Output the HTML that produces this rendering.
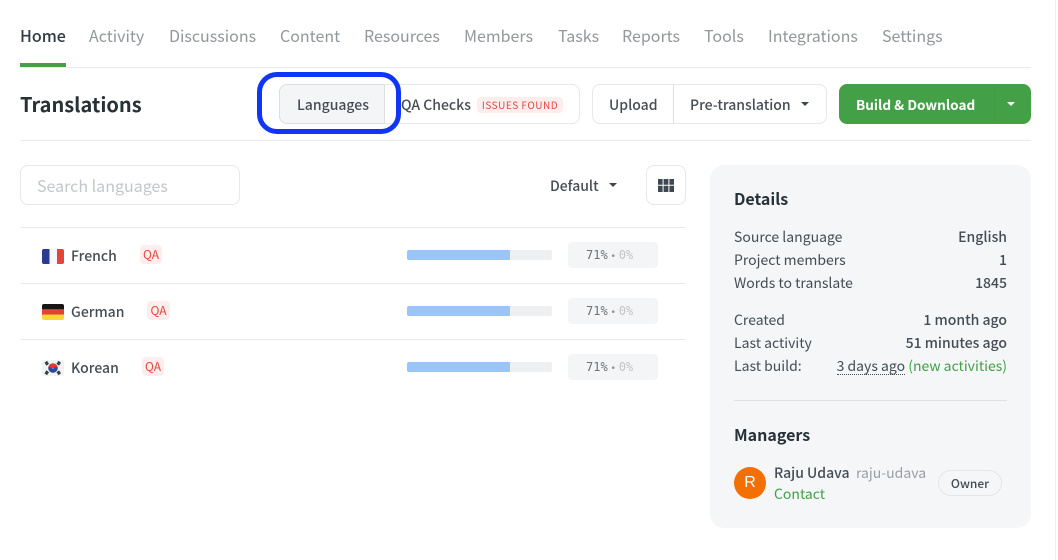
<!DOCTYPE html>
<html><head><meta charset="utf-8"><style>
html,body{margin:0;padding:0;background:#fff}
#p{position:relative;width:1058px;height:560px;overflow:hidden;background:#fff;font-family:"Noto Sans CJK JP","Liberation Sans",sans-serif;font-size:14px;color:#454c54}
#p div,#p span.t{position:absolute;box-sizing:border-box}
.t{white-space:nowrap;line-height:20px;height:20px}
.n{font-size:16px;color:#92979c;top:25px;line-height:20px}
.r{text-align:right;right:51px}
.b{font-weight:500}
.h{font-weight:700;color:#263238;font-size:16px}
.q{background:#fdeeed;color:#e5483f;font-size:12px;border-radius:4px;text-align:center;line-height:19px;height:19px}
.m{font-family:"DejaVu Sans Mono","Liberation Mono",monospace;font-size:12px;background:#f4f5f7;border-radius:4px;width:90px;height:26px;left:568px;line-height:26px;color:#6a7076;padding-left:18px;white-space:nowrap}
.m i{font-style:normal;color:#c2c5c9}
.m b{font-weight:400;color:#8d9297;display:inline-block;width:11px;text-align:center;font-size:9px}
.bar{left:407px;width:145px;height:10px;background:#eeeff1;border-radius:2px;overflow:hidden}
.bar div{left:0;top:0;height:10px;width:103px;background:#9ac5fb}
.l{left:20px;width:666px;height:1px;background:#e9eaec}
.c{width:0;height:0;border-left:4.5px solid transparent;border-right:4.5px solid transparent;border-top:4.5px solid #3f4750}
</style></head><body><div id="p">
<span class="t n b" style="left:20px;color:#2f3a42">Home</span>
<span class="t n" style="left:89px">Activity</span>
<span class="t n" style="left:169px">Discussions</span>
<span class="t n" style="left:280px">Content</span>
<span class="t n" style="left:364px">Resources</span>
<span class="t n" style="left:464px">Members</span>
<span class="t n" style="left:558px">Tasks</span>
<span class="t n" style="left:622px">Reports</span>
<span class="t n" style="left:704px">Tools</span>
<span class="t n" style="left:768px">Integrations</span>
<span class="t n" style="left:882px">Settings</span>
<div style="left:20px;top:67px;width:1011px;height:1px;background:#e9eaec"></div>
<div style="left:20px;top:63px;width:46px;height:4px;background:#43a047"></div>
<span class="t" style="left:20px;top:94px;font-size:20px;font-weight:700;color:#263238">Translations</span>
<div style="left:20px;top:140px;width:1011px;height:1px;background:#e9eaec"></div>
<div style="left:279px;top:84px;width:301px;height:40px;border:1px solid #e6e8ea;border-radius:8px"></div>
<div style="left:279px;top:84px;width:106px;height:40px;background:#f4f5f6;border:1px solid #dcdfe2;border-radius:8px 0 0 8px"></div>
<span class="t b" style="left:297px;top:95px">Languages</span>
<span class="t b" style="left:401px;top:95px">QA Checks</span>
<div class="t" style="left:477px;top:97px;width:86px;height:16px;line-height:16px;background:#fdeeed;color:#e5483f;font-size:10px;letter-spacing:.5px;border-radius:4px;text-align:center">ISSUES FOUND</div>
<div style="left:257px;top:72px;width:144px;height:62px;border:5px solid #0f35f5;border-radius:20px"></div>
<div style="left:592px;top:84px;width:235px;height:40px;border:1px solid #e6e8ea;border-radius:8px"></div>
<div style="left:673px;top:84px;width:1px;height:40px;background:#dcdfe2"></div>
<span class="t b" style="left:609px;top:95px">Upload</span>
<span class="t b" style="left:690px;top:95px">Pre-translation</span>
<div class="c" style="left:801px;top:102px"></div>
<div style="left:839px;top:84px;width:192px;height:40px;background:#43a047;border-radius:8px"></div>
<div style="left:994px;top:84px;width:1px;height:40px;background:rgba(0,0,0,.02)"></div>
<span class="t" style="left:856px;top:94px;font-size:13.6px;font-weight:700;color:#fff">Build &amp; Download</span>
<div class="c" style="left:1007px;top:102px;border-top-color:#fff"></div>
<div style="left:20px;top:165px;width:220px;height:40px;border:1px solid #e6e8ea;border-radius:8px"></div>
<span class="t" style="left:37px;top:175px;font-size:16px;color:#c3c7cb">Search languages</span>
<span class="t b" style="left:550px;top:176px">Default</span>
<div class="c" style="left:609px;top:183px"></div>
<div style="left:646px;top:165px;width:40px;height:40px;border:1px solid #e6e8ea;border-radius:8px"></div>
<svg style="position:absolute;left:658px;top:179px" width="16" height="13" viewBox="0 0 16 13"><path fill="#3f4750" d="M0 0h4.600v5.800H0zM5.600 0h4.800v5.800H5.600zM11.400 0H16v5.800h-4.600zM0 6.800h4.600V13H0zM5.600 6.800h4.800V13H5.600zM11.400 6.800H16V13h-4.600z"/></svg>
<div class="l" style="top:227px"></div><div class="l" style="top:283px"></div><div class="l" style="top:339px"></div>
<svg style="position:absolute;left:42px;top:249px" width="22" height="15" viewBox="0 0 22 15"><rect width="22" height="15" rx="2" fill="#f6f7f9"/><path fill="#2b3a8f" d="M2 0h5.500v15H2a2 2 0 0 1-2-2V2a2 2 0 0 1 2-2z"/><path fill="#e5443a" d="M15 0h5a2 2 0 0 1 2 2v11a2 2 0 0 1-2 2h-5z"/></svg>
<span class="t b" style="left:71px;top:246px;font-size:14px">French</span>
<div class="q" style="left:140px;top:245px;width:22px">QA</div>
<svg style="position:absolute;left:42px;top:304px" width="22" height="16" viewBox="0 0 22 16"><path fill="#161616" d="M2 0h18a2 2 0 0 1 2 2v3.400H0V2a2 2 0 0 1 2-2z"/><path fill="#e0452f" d="M0 5.400h22v5.300H0z"/><path fill="#fdd835" d="M0 10.700h22V14a2 2 0 0 1-2 2H2a2 2 0 0 1-2-2z"/></svg>
<span class="t b" style="left:71px;top:302px;font-size:14px">German</span>
<div class="q" style="left:147px;top:301px;width:23px">QA</div>
<svg style="position:absolute;left:42px;top:360px" width="22" height="16" viewBox="0 0 22 16"><rect width="22" height="16" rx="2" fill="#f1f2f4"/><path fill="#e0392e" d="M6.200 8a4.800 4.800 0 0 1 9.600 0z"/><path fill="#2a4a9c" d="M6.200 8a4.800 4.800 0 0 0 9.600 0c0-1-1-1.400-2.200-1s-1.500 1.500-2.600 1.500S8.700 7 7.800 7 6.200 7.200 6.200 8z"/><g stroke="#22272b" stroke-width="1.500"><path d="M3 3.500l2.500-2M4 5l2.500-2M16 1.500l2.500 2M15 3l2.500 2M3 12.500l2.500 2M4 11l2.500 2M18.500 12.500l-2.500 2M17.500 11L15 13"/></g></svg>
<span class="t b" style="left:71px;top:358px;font-size:14px">Korean</span>
<div class="q" style="left:142px;top:357px;width:22px">QA</div>
<div class="bar" style="top:250px"><div></div></div><div class="bar" style="top:306px"><div></div></div><div class="bar" style="top:362px"><div></div></div>
<div class="m" style="top:242px">71%<b>•</b><i>0%</i></div>
<div class="m" style="top:298px">71%<b>•</b><i>0%</i></div>
<div class="m" style="top:354px">71%<b>•</b><i>0%</i></div>
<div style="left:710px;top:165px;width:321px;height:363px;background:#f4f6f8;border-radius:14px"></div>
<span class="t h" style="left:734px;top:188px">Details</span>
<span class="t" style="left:734px;top:227px">Source language</span><span class="t r b" style="top:227px">English</span>
<span class="t" style="left:734px;top:250px">Project members</span><span class="t r b" style="top:250px">1</span>
<span class="t" style="left:734px;top:273px">Words to translate</span><span class="t r b" style="top:273px">1845</span>
<span class="t" style="left:734px;top:310px">Created</span><span class="t r b" style="top:310px">1 month ago</span>
<span class="t" style="left:734px;top:333px">Last activity</span><span class="t r b" style="top:333px">51 minutes ago</span>
<span class="t" style="left:734px;top:356px">Last build:</span><span class="t r" style="top:356px"><span style="border-bottom:1px dotted #454c54;display:inline-block;line-height:15px">3 days ago</span> <span style="color:#43a047">(new activities)</span></span>
<div style="left:734px;top:400px;width:273px;height:1px;background:#dfe1e5"></div>
<span class="t h" style="left:734px;top:424px">Managers</span>
<div style="left:734px;top:467px;width:32px;height:32px;border-radius:50%;background:#f46f02;color:#fff;text-align:center;line-height:32px;font-size:16px;font-family:'Liberation Sans',sans-serif">R</div>
<span class="t b" style="left:774px;top:463px">Raju Udava</span>
<span class="t" style="left:856px;top:463px;color:#9a9ea3">raju-udava</span>
<span class="t" style="left:774px;top:484px;color:#43a047">Contact</span>
<div style="left:938px;top:470px;width:64px;height:26px;border:1px solid #e4e6e9;border-radius:13px;text-align:center;line-height:25px;font-size:12px;font-weight:500">Owner</div>
<div style="left:1055px;top:0;width:1px;height:560px;background:#f0f0f0"></div>
</div></body></html>
